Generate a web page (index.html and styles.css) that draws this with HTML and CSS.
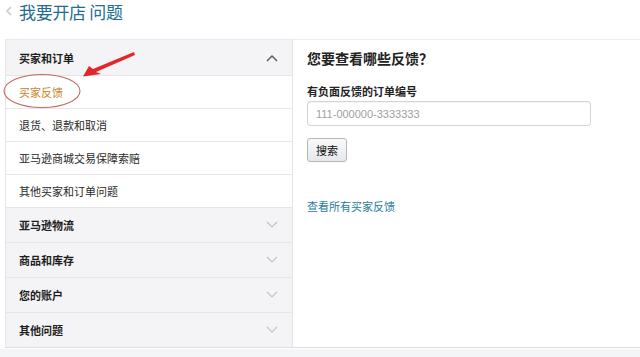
FILE: index.html
```html
<!DOCTYPE html>
<html lang="zh-CN">
<head>
<meta charset="utf-8">
<title>我要开店 问题</title>
<link rel="stylesheet" href="styles.css">
</head>
<body>
<div class="page">
  <header class="top">
    <svg class="back" width="8" height="10" viewBox="0 0 8 10"><path d="M6 1 L2 5 L6 9" fill="none" stroke="#c8c8cc" stroke-width="1.5"/></svg>
    <h1 class="title">我要开店 问题</h1>
  </header>
  <main class="main">
    <nav class="side">
      <div class="sec open">
        <span>买家和订单</span>
        <svg class="chev" width="12" height="8" viewBox="0 0 12 8"><path d="M1 7 L6 2 L11 7" fill="none" stroke="#555" stroke-width="1.4"/></svg>
      </div>
      <div class="item active">买家反馈</div>
      <div class="item">退货、退款和取消</div>
      <div class="item">亚马逊商城交易保障索赔</div>
      <div class="item">其他买家和订单问题</div>
      <div class="sec">
        <span>亚马逊物流</span>
        <svg class="chev" width="12" height="8" viewBox="0 0 12 8"><path d="M1 1 L6 6 L11 1" fill="none" stroke="#c4c4c8" stroke-width="1.2"/></svg>
      </div>
      <div class="sec">
        <span>商品和库存</span>
        <svg class="chev" width="12" height="8" viewBox="0 0 12 8"><path d="M1 1 L6 6 L11 1" fill="none" stroke="#c4c4c8" stroke-width="1.2"/></svg>
      </div>
      <div class="sec">
        <span>您的账户</span>
        <svg class="chev" width="12" height="8" viewBox="0 0 12 8"><path d="M1 1 L6 6 L11 1" fill="none" stroke="#c4c4c8" stroke-width="1.2"/></svg>
      </div>
      <div class="sec last">
        <span>其他问题</span>
        <svg class="chev" width="12" height="8" viewBox="0 0 12 8"><path d="M1 1 L6 6 L11 1" fill="none" stroke="#c4c4c8" stroke-width="1.2"/></svg>
      </div>
    </nav>
    <section class="content">
      <h2 class="q">您要查看哪些反馈？</h2>
      <label class="lbl" for="order">有负面反馈的订单编号</label>
      <input id="order" class="inp" type="text" placeholder="111-000000-3333333">
      <button class="btn" type="button">搜索</button>
      <a class="link" href="#">查看所有买家反馈</a>
    </section>
  </main>
  <div class="foot"></div>
  <svg class="annot" width="640" height="357" viewBox="0 0 640 357">
    <ellipse cx="42" cy="91" rx="38" ry="16.5" fill="none" stroke="#c06a5e" stroke-width="1.1"/>
    <polygon points="134,52 93,69 89,66 83,76.5 101,74 96,72 135,55" fill="#e3262b"/>
  </svg>
</div>
</body>
</html>
```
FILE: styles.css
```css
* { box-sizing: border-box; }
html, body { margin: 0; padding: 0; }
body {
  width: 640px;
  height: 357px;
  overflow: hidden;
  background: #ffffff;
  font-family: "Noto Sans CJK SC", "Noto Sans", sans-serif;
  color: #222;
}
.page { position: relative; width: 640px; height: 357px; }
.top {
  display: flex;
  align-items: center;
  height: 24px;
  padding: 0 0 0 5px;
}
.back {
  display: block;
  margin-right: 6px;
  margin-top: -2px;
}
.title {
  margin: 0;
  font-size: 17px;
  line-height: 22px;
  font-weight: normal;
  color: #216e90;
  letter-spacing: -0.3px;
}
.main {
  display: flex;
  margin-top: 15px;
  padding-left: 5px;
}
.side {
  width: 288px;
  border: 1px solid #e4e4e8;
  border-top: 1px solid #e9e9ec;
  border-bottom: 1px solid #dedee2;
  background: #fff;
}
.sec {
  display: flex;
  align-items: center;
  justify-content: space-between;
  height: 35px;
  padding: 0 14px 0 13px;
  background: #f4f3f6;
  border-top: 1px solid #e6e6ea;
  font-size: 11px;
  font-weight: bold;
  color: #1e1e1e;
}
.sec.open {
  height: 36px;
  border-top: none;
  border-bottom: 1px solid #e6e6ea;
}
.chev { display: block; }
.item {
  display: flex;
  align-items: center;
  height: 33px;
  padding-left: 13px;
  font-size: 11px;
  color: #2a2a2a;
  border-top: 1px solid #e8e8ec;
  background: #fff;
}
.item.active {
  border-top: none;
  height: 32px;
  color: #c9862c;
}
.content {
  flex: 1;
  border-top: 1px solid #eeeef0;
  border-bottom: 1px solid #dedee2;
  padding: 8px 0 0 14px;
  display: flex;
  flex-direction: column;
  align-items: flex-start;
}
.q {
  margin: 0;
  font-size: 14px;
  line-height: 20px;
  font-weight: bold;
  color: #222;
}
.lbl {
  margin-top: 16px;
  font-size: 11px;
  line-height: 14px;
  font-weight: bold;
  color: #222;
}
.inp {
  margin-top: 3px;
  width: 284px;
  height: 25px;
  border: 1px solid #d4d4d8;
  border-radius: 3px;
  padding: 0 8px;
  font-family: "Liberation Sans", sans-serif;
  font-size: 11px;
  color: #333;
  box-shadow: inset 0 1px 1px rgba(0,0,0,0.04);
}
.inp::placeholder { color: #a0a0a0; }
.btn {
  margin-top: 12px;
  width: 40px;
  height: 24px;
  padding: 0;
  border: 1px solid #b4b6ba;
  border-radius: 3px;
  background: linear-gradient(#f8f9fa, #e6e8eb);
  font-family: "Noto Sans CJK SC", sans-serif;
  font-size: 11px;
  color: #111;
}
.link {
  margin-top: 37px;
  font-size: 11px;
  line-height: 14px;
  color: #1f7d9b;
  text-decoration: none;
}
.foot {
  height: 8px;
  margin-top: 1px;
  background: #f3f5f7;
}
.annot {
  position: absolute;
  left: 0;
  top: 0;
  pointer-events: none;
}
```
